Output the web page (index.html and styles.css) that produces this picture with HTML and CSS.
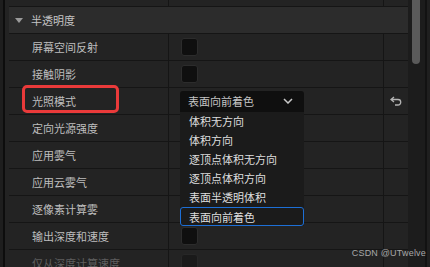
FILE: index.html
```html
<!DOCTYPE html>
<html lang="zh">
<head>
    <meta charset="UTF-8">
    <title>细节面板</title>
    <link rel="stylesheet" href="styles.css">
</head>
<body>

<div class="editor">
    <div class="gutter"></div>

    <div class="panel">
        <div class="row row-top">
            <div class="name"></div>
            <div class="value"></div>
            <div class="reset"></div>
        </div>

        <div class="group">
            <span class="caret"></span>
            <span>半透明度</span>
        </div>

        <div class="row">
            <div class="name">屏幕空间反射</div>
            <div class="value"><span class="check"></span></div>
            <div class="reset"></div>
        </div>
        <div class="row">
            <div class="name">接触阴影</div>
            <div class="value"><span class="check"></span></div>
            <div class="reset"></div>
        </div>
        <div class="row">
            <div class="name marked">光照模式</div>
            <div class="value">
                <div class="combo">
                    <span>表面向前着色</span>
                    <svg class="chevron" width="10" height="6" viewBox="0 0 10 6">
                        <path d="M1 1 L5 5 L9 1" fill="none" stroke="#c8c8c8" stroke-width="1.5"/>
                    </svg>
                    <ul class="menu">
                        <li>体积无方向</li>
                        <li>体积方向</li>
                        <li>逐顶点体积无方向</li>
                        <li>逐顶点体积方向</li>
                        <li>表面半透明体积</li>
                        <li class="selected">表面向前着色</li>
                    </ul>
                </div>
            </div>
            <div class="reset">
                <svg width="12" height="10" viewBox="0 0 12 10">
                    <path d="M4 1 L1 3.5 L4 6 M1.5 3.5 H8 A2.75 2.75 0 0 1 8 9 H5" fill="none" stroke="#b4b4b4" stroke-width="1.3"/>
                </svg>
            </div>
        </div>
        <div class="row">
            <div class="name">定向光源强度</div>
            <div class="value"></div>
            <div class="reset"></div>
        </div>
        <div class="row">
            <div class="name">应用雾气</div>
            <div class="value"></div>
            <div class="reset"></div>
        </div>
        <div class="row">
            <div class="name">应用云雾气</div>
            <div class="value"></div>
            <div class="reset"></div>
        </div>
        <div class="row">
            <div class="name">逐像素计算雾</div>
            <div class="value"></div>
            <div class="reset"></div>
        </div>
        <div class="row">
            <div class="name">输出深度和速度</div>
            <div class="value"><span class="check"></span></div>
            <div class="reset"></div>
        </div>
        <div class="row disabled">
            <div class="name">仅从深度计算速度</div>
            <div class="value"><span class="check"></span></div>
            <div class="reset"></div>
        </div>
    </div>

    <div class="scrollbar"><div class="thumb"></div></div>
    <div class="edge"></div>
</div>

<div class="watermark">CSDN @UTwelve</div>

</body>
</html>
```

FILE: styles.css
```css
body {
    margin: 0;
    width: 430px;
    height: 267px;
    overflow: hidden;
    background-color: #232323;
    font-family: "Noto Sans CJK SC", "Noto Sans", sans-serif;
    font-size: 11px;
    color: #bebebe;
    position: relative;
}

.editor {
    display: flex;
    height: 267px;
}

.gutter {
    width: 0;
    border-left: 3px solid #1e1e1e;
    border-right: 2px solid #0d0d0d;
    margin-right: 4px;
}

.panel {
    width: 399px;
    background-color: #232323;
}

.row {
    display: grid;
    grid-template-columns: 160px 215px 23px;
    height: 26px;
    border-bottom: 1px solid #151515;
}

.row-top {
    height: 6px;
}

.name {
    display: flex;
    align-items: center;
    padding-left: 23px;
    border-right: 1px solid #151515;
    position: relative;
    white-space: nowrap;
}

.value {
    display: flex;
    align-items: center;
    padding-left: 12px;
    border-right: 1px solid #151515;
    position: relative;
}

.reset {
    display: flex;
    align-items: center;
    justify-content: center;
}

.group {
    display: flex;
    align-items: center;
    gap: 8px;
    height: 26px;
    padding-left: 6px;
    background-color: #2c2c2c;
    border-bottom: 1px solid #151515;
    color: #c4c4c4;
}

.caret {
    width: 0;
    height: 0;
    border-left: 4px solid transparent;
    border-right: 4px solid transparent;
    border-top: 5px solid #9a9a9a;
}

.check {
    width: 15px;
    height: 16px;
    background-color: #0f0f0f;
    border: 1px solid #2c2c2c;
    border-radius: 3px;
}

.marked::after {
    content: "";
    position: absolute;
    left: 13px;
    top: -3px;
    width: 91px;
    height: 22px;
    border: 3px solid #ea3a3a;
    border-radius: 5px;
}

.combo {
    position: relative;
    display: flex;
    align-items: center;
    justify-content: space-between;
    width: 124px;
    height: 21px;
    margin-left: -1px;
    padding: 0 11px 0 8px;
    box-sizing: border-box;
    background-color: #0f0f0f;
    border-radius: 3px 3px 0 0;
    color: #c4c4c4;
}

.menu {
    position: absolute;
    top: 21px;
    left: 0;
    width: 124px;
    margin: 0;
    padding: 0;
    list-style: none;
    background-color: #1b1b1b;
    color: #dedede;
    z-index: 2;
}

.menu li {
    height: 19px;
    line-height: 18px;
    padding-left: 9px;
    box-sizing: border-box;
}

.menu .selected {
    border: 1px solid #1d6fd6;
    border-radius: 3px;
    padding-left: 8px;
}

.disabled .name {
    color: #5e5e5e;
}

.disabled .check {
    background-color: #1a1a1a;
    border-color: #272727;
}

.scrollbar {
    width: 17px;
    background-color: #1c1c1c;
}

.thumb {
    width: 8px;
    height: 64px;
    margin-left: 4px;
    background-color: #5a5a5a;
    border-radius: 0 0 4px 4px;
}

.edge {
    width: 5px;
    border-left: 2px solid #121212;
    background-color: #1f1f1f;
    box-sizing: border-box;
}

.watermark {
    position: absolute;
    right: 4px;
    top: 248px;
    font-family: "Liberation Sans", Arial, sans-serif;
    font-size: 9px;
    color: #a8a8a8;
    letter-spacing: 0.2px;
}
```
